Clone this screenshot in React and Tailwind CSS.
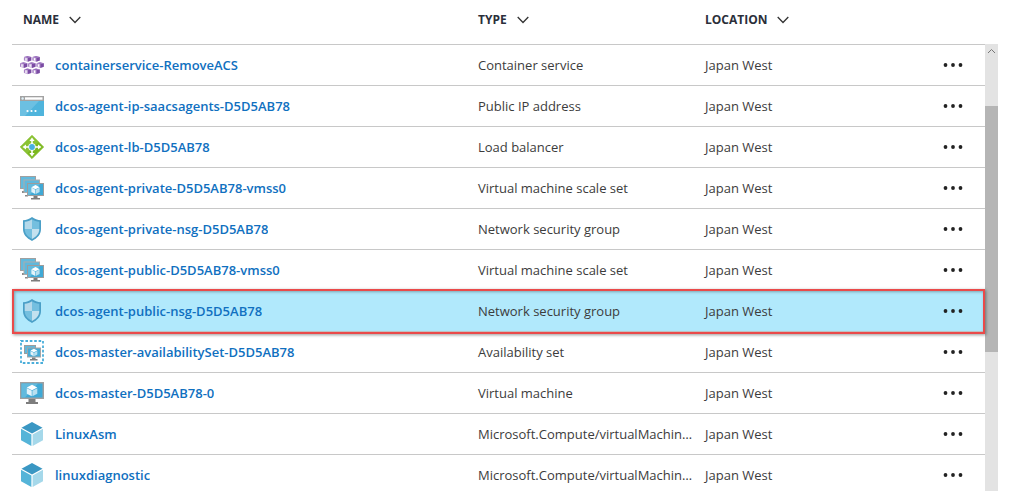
import { clsx } from 'clsx';

// ─── Icons ────────────────────────────────────────────────────────────────────

function ContainerIcon() {
  const pods = [[4, 3], [12.5, 3], [0, 9.2], [8.2, 9.2], [16.5, 9.2], [4, 15.4], [12.5, 15.4]];
  return (
    <svg viewBox="0 0 24 24" className="size-6" aria-hidden="true">
      {pods.map(([x, y]) => (
        <g key={`${x}-${y}`} transform={`translate(${x} ${y})`}>
          <path d="M0 1.1 3.5 0 7.3 1.1v3.5L3.5 5.8 0 4.6z" fill="#c9b0dc" />
          <path d="M3.8 1.7 7.3 1.1v3.5L3.8 5.7z" fill="#7a4ba3" />
          <path d="M0 1.1 3.5 0 7.3 1.1 3.5 1.9z" fill="#9a70bd" />
          <path d="M.4 1.6v2.8" stroke="#9a70bd" strokeWidth=".8" />
          <path d="M2 2.2v2.3" stroke="#fff" strokeWidth="1.1" />
        </g>
      ))}
    </svg>
  );
}

function PublicIpIcon() {
  return (
    <svg viewBox="0 0 24 24" className="size-6" aria-hidden="true">
      <path d="M0 2h24v20H0z" fill="#4fb4dc" />
      <path d="M0 7h19L5 22H0z" fill="#6cc0e2" />
      <path d="M0 2h24v5H0z" fill="#a2a2a2" />
      <path d="M5 3.3h17.5v2.4H5z" fill="#fff" />
      <circle cx="2.6" cy="4.5" r="1.2" fill="#dff1f9" />
      <circle cx="7.5" cy="17" r="1.1" fill="#fff" />
      <circle cx="11.5" cy="17" r="1.1" fill="#fff" />
      <circle cx="15.5" cy="17" r="1.1" fill="#fff" />
    </svg>
  );
}

function LoadBalancerIcon() {
  return (
    <svg viewBox="0 0 24 24" className="size-6" aria-hidden="true">
      <path d="M12 .4 23.6 12 12 23.6.4 12z" fill="#7cb81e" stroke="#7cb81e" strokeWidth=".8" strokeLinejoin="round" />
      <path d="M12 .4.4 12 7 18.6 18.5 6.9z" fill="#8bc334" />
      <path d="M12 5v14M5 12h14" stroke="#fff" strokeWidth="1.6" />
      <path d="m12 2.6 2.6 3.4H9.4zM12 21.4l2.6-3.4H9.4zM2.6 12l3.4-2.6v5.2zM21.4 12l-3.4-2.6v5.2z" fill="#fff" />
      <circle cx="12" cy="12" r="3.7" fill="#fff" />
      <circle cx="12" cy="12" r="2.9" fill="#48afe0" />
    </svg>
  );
}

function Cube({ x, y, s }) {
  return (
    <g transform={`translate(${x} ${y}) scale(${s})`}>
      <path d="M5 0 10 2.6 5 5.2 0 2.6z" fill="#fff" />
      <path d="M0 3.2 4.7 5.7V11L0 8.5z" fill="#e3f3fa" />
      <path d="M10 3.2 5.3 5.7V11L10 8.5z" fill="#b9e0f0" />
    </g>
  );
}

function ScaleSetIcon() {
  return (
    <svg viewBox="0 0 24 24" className="size-6" aria-hidden="true">
      <path d="M0 0h16v13H0z" fill="#a0a0a0" />
      <path d="M1 1h14v11H1z" fill="#62badd" />
      <path d="M2 15h4v2H2z" fill="#8a8a8a" />
      <path d="M3.5 3.5H20V17H3.5z" fill="#acacac" />
      <path d="M4.5 4.5H19V16H4.5z" fill="#5fb8dc" />
      <path d="M5 19h3v1.5H5z" fill="#8a8a8a" />
      <path d="M7 7h17v13H7z" fill="#9c9c9c" />
      <path d="M8 8h15v11H8z" fill="#3fa9d6" />
      <path d="M8 8h12L10 19H8z" fill="#62badd" />
      <path d="M13.5 20h4v2H20v1.5h-9V22h2.5z" fill="#7d7d7d" />
      <Cube x="11.4" y="9" s=".82" />
    </svg>
  );
}

function ShieldIcon() {
  return (
    <svg viewBox="0 0 24 24" className="size-6" aria-hidden="true">
      <path d="M12 0c2.5 2 5.5 3 9 3.2V12c0 5.5-3.5 9-9 12-5.5-3-9-6.5-9-12V3.2C6.5 3 9.5 2 12 0z" fill="#4a9fc7" />
      <path d="M12 2.2V12H4.7V4.7C7.5 4.4 10 3.7 12 2.2z" fill="#b5d9ea" />
      <path d="M12 2.2V12h7.3V4.7C16.5 4.4 14 3.7 12 2.2z" fill="#74bfdf" />
      <path d="M4.7 12H12v10C7.5 19.5 4.7 16.5 4.7 12z" fill="#74bfdf" />
      <path d="M19.3 12H12v10c4.5-2.5 7.3-5.5 7.3-10z" fill="#c3e1ef" />
    </svg>
  );
}

function AvailabilitySetIcon() {
  return (
    <svg viewBox="0 0 24 24" className="size-6" aria-hidden="true">
      <path d="M1 1h22v22H1z" fill="none" stroke="#4aaeda" strokeWidth="1.8" strokeDasharray="2.6 1.8" />
      <path d="M4 5h12v9H4z" fill="#9c9c9c" />
      <path d="M5 6h10v7H5z" fill="#5fb8dc" />
      <path d="M7 7.5h14v10H7z" fill="#a5a5a5" />
      <path d="M8 8.5h12v8H8z" fill="#45abd6" />
      <path d="M12 17.5h3.5V19h2v1.5H10V19h2z" fill="#7d7d7d" />
      <Cube x="10.5" y="8.8" s=".68" />
    </svg>
  );
}

function VirtualMachineIcon() {
  return (
    <svg viewBox="0 0 24 24" className="size-6" aria-hidden="true">
      <path d="M0 1h24v17H0z" fill="#a0a0a0" />
      <path d="M1.5 2.5h21v14h-21z" fill="#3fa9d6" />
      <path d="M1.5 2.5H18L5 16.5H1.5z" fill="#62badd" />
      <path d="M8.5 18h7v3H18v2H6v-2h2.5z" fill="#7d7d7d" />
      <Cube x="6.8" y="3.8" s="1.05" />
    </svg>
  );
}

function ResourceIcon() {
  return (
    <svg viewBox="0 0 24 24" className="size-6" aria-hidden="true">
      <path d="M12 0 22.5 5.7 12 11.4 1.5 5.7z" fill="#3a97c3" />
      <path d="M1 6.8 11.4 12.4V24L1 18.2z" fill="#55b4d8" />
      <path d="M23 6.8 12.6 12.4V24L23 18.2z" fill="#a5d8ea" />
    </svg>
  );
}

function ChevronDown() {
  return (
    <svg viewBox="0 0 12 8" className="h-2 w-3" fill="none" stroke="#333" strokeWidth="1.3" aria-hidden="true">
      <path d="M.7 1 6 6.5 11.3 1" />
    </svg>
  );
}

// ─── Data ─────────────────────────────────────────────────────────────────────

const columns = ['Name', 'Type', 'Location'];

const resources = [
  { name: 'containerservice-RemoveACS', type: 'Container service', icon: ContainerIcon },
  { name: 'dcos-agent-ip-saacsagents-D5D5AB78', type: 'Public IP address', icon: PublicIpIcon },
  { name: 'dcos-agent-lb-D5D5AB78', type: 'Load balancer', icon: LoadBalancerIcon },
  { name: 'dcos-agent-private-D5D5AB78-vmss0', type: 'Virtual machine scale set', icon: ScaleSetIcon },
  { name: 'dcos-agent-private-nsg-D5D5AB78', type: 'Network security group', icon: ShieldIcon },
  { name: 'dcos-agent-public-D5D5AB78-vmss0', type: 'Virtual machine scale set', icon: ScaleSetIcon },
  { name: 'dcos-agent-public-nsg-D5D5AB78', type: 'Network security group', icon: ShieldIcon, selected: true },
  { name: 'dcos-master-availabilitySet-D5D5AB78', type: 'Availability set', icon: AvailabilitySetIcon },
  { name: 'dcos-master-D5D5AB78-0', type: 'Virtual machine', icon: VirtualMachineIcon },
  { name: 'LinuxAsm', type: 'Microsoft.Compute/virtualMachines', icon: ResourceIcon },
  { name: 'linuxdiagnostic', type: 'Microsoft.Compute/virtualMachines', icon: ResourceIcon },
];

// ─── Table ────────────────────────────────────────────────────────────────────

function ResourceRow({ name, type, icon: Icon, selected }) {
  return (
    <tr className={clsx('relative h-[41px]', selected && 'bg-[#b1e9fc]')}>
      <td className="border-b border-[#c8c8c8] px-2">
        <div className="flex items-center gap-[11px]">
          <Icon />
          <a href="#" className="truncate pt-0.5 font-semibold text-[#1070c0]">{name}</a>
        </div>
        {selected && (
          <span className="pointer-events-none absolute inset-x-0 -inset-y-0.5 border-2 border-[#ea4a4a] shadow-[1px_1px_3px_rgba(0,0,0,0.4),inset_1px_1px_3px_rgba(0,0,0,0.3)]" />
        )}
      </td>
      <td className="truncate border-b border-[#c8c8c8] pt-0.5 pr-1 pl-2">{type}</td>
      <td className="border-b border-[#c8c8c8] px-2 pt-0.5">Japan West</td>
      <td className="border-b border-[#c8c8c8] pr-[22px]">
        <button type="button" aria-label={`More actions for ${name}`} className="ml-auto block">
          <svg viewBox="0 0 20 6" className="h-1.5 w-5" fill="#222">
            <circle cx="2.5" cy="3" r="1.9" />
            <circle cx="10" cy="3" r="1.9" />
            <circle cx="17.5" cy="3" r="1.9" />
          </svg>
        </button>
      </td>
    </tr>
  );
}

export default function App() {
  return (
    <div className="flex h-screen overflow-hidden bg-white pl-3 pr-[26px] font-['Open_Sans',sans-serif] text-[13px] text-[#3c3c3c]">
      <div className="min-w-0 flex-1">
        <table className="w-full table-fixed border-separate border-spacing-0">
          <colgroup>
            <col />
            <col className="w-[227px]" />
            <col className="w-[228px]" />
            <col className="w-[60px]" />
          </colgroup>
          <thead>
            <tr className="h-[45px]">
              {columns.map((label) => (
                <th key={label} scope="col" className="border-b border-[#c8c8c8] px-2 pb-1 text-left first:pl-[11px]">
                  <button type="button" className="flex items-center gap-2.5 text-xs font-bold uppercase text-[#2b2f3a]">
                    {label}
                    <ChevronDown />
                  </button>
                </th>
              ))}
              <td className="border-b border-[#c8c8c8]" />
            </tr>
          </thead>
          <tbody>
            {resources.map((resource) => (
              <ResourceRow key={resource.name} {...resource} />
            ))}
          </tbody>
        </table>
      </div>

      {/* Scrollbar */}
      <div className="mt-11 flex w-[13px] flex-col bg-[#e3e3e3]">
        <svg viewBox="0 0 13 14" className="h-3.5 w-full" fill="none" stroke="#777" aria-hidden="true">
          <path d="M3 9 6.5 5.5 10 9" />
        </svg>
        <div className="mt-12 h-[55%] bg-[#b5b5b5]" />
      </div>
    </div>
  );
}
